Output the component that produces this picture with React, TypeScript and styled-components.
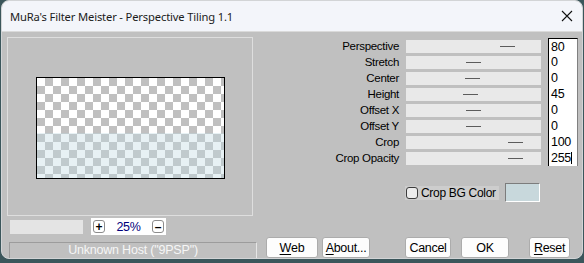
import React from 'react';
import styled, { createGlobalStyle } from 'styled-components';

const GlobalStyle = createGlobalStyle`
  html, body {
    margin: 0;
    padding: 0;
    background: #3b565b;
  }
  body {
    width: 584px;
    height: 263px;
    overflow: hidden;
    font-family: 'Liberation Sans', Arial, sans-serif;
  }
`;

const SLIDERS = [
  { label: 'Perspective', value: '80', thumb: 94 },
  { label: 'Stretch', value: '0', thumb: 60 },
  { label: 'Center', value: '0', thumb: 59 },
  { label: 'Height', value: '45', thumb: 57 },
  { label: 'Offset X', value: '0', thumb: 60 },
  { label: 'Offset Y', value: '0', thumb: 60 },
  { label: 'Crop', value: '100', thumb: 102 },
  { label: 'Crop Opacity', value: '255', thumb: 102, focused: true },
];

export default function App() {
  return (
    <>
      <GlobalStyle />
      <Window>
        <TitleBar>
          <Title>MuRa's Filter Meister - Perspective Tiling 1.1</Title>
          <CloseIcon width="12" height="12" viewBox="0 0 12 12">
            <path d="M1 1 L11 11 M11 1 L1 11" stroke="#111" strokeWidth="1.1" fill="none" />
          </CloseIcon>
        </TitleBar>
        <Client>
          <LeftColumn>
            <PreviewFrame>
              <Preview />
            </PreviewFrame>
            <ZoomRow>
              <ProgressBox />
              <ZoomBox>
                <ZoomButton>+</ZoomButton>
                <ZoomValue>25%</ZoomValue>
                <ZoomButton>–</ZoomButton>
              </ZoomBox>
            </ZoomRow>
            <StatusBar>Unknown Host ("9PSP")</StatusBar>
          </LeftColumn>
          <RightColumn>
            <SliderGrid>
              {SLIDERS.map((s, i) => (
                <React.Fragment key={s.label}>
                  <Label>{s.label}</Label>
                  <Track>
                    <Thumb $left={s.thumb} />
                  </Track>
                  <ValueBox $first={i === 0}>
                    {s.value}
                    {s.focused && <Caret />}
                  </ValueBox>
                </React.Fragment>
              ))}
            </SliderGrid>
            <CheckRow>
              <CheckLabel>
                <CheckBox />
                Crop BG Color
              </CheckLabel>
              <Swatch />
            </CheckRow>
            <ButtonRow>
              <Button $width={52}>
                <u>W</u>eb
              </Button>
              <Button $width={48} $gap={4}>
                <u>A</u>bout...
              </Button>
              <Button $width={46} $gap={35}>
                Cancel
              </Button>
              <Button $width={48} $gap={10}>
                OK
              </Button>
              <Button $width={41} $gap={20}>
                <u>R</u>eset
              </Button>
            </ButtonRow>
          </RightColumn>
        </Client>
      </Window>
    </>
  );
}

const Window = styled.div`
  display: flex;
  flex-direction: column;
  box-sizing: border-box;
  margin-left: 1px;
  width: 582px;
  height: 259px;
  border: 1px solid #d2d4d6;
  border-radius: 8px;
  overflow: hidden;
  background: #c0c0c0;
`;

const TitleBar = styled.div`
  display: flex;
  align-items: center;
  justify-content: space-between;
  height: 30px;
  padding: 0 9px 0 8px;
  background: #f3f5fa;
  flex-shrink: 0;
`;

const Title = styled.div`
  font-family: 'Noto Sans', 'Open Sans', sans-serif;
  font-size: 11.2px;
  color: #1b1b1b;
  letter-spacing: -0.15px;
`;

const CloseIcon = styled.svg`
  display: block;
`;

const Client = styled.div`
  display: flex;
  flex: 1;
  border-top: 1px solid #dadada;
  padding: 5px 0 0 5px;
`;

const LeftColumn = styled.div`
  display: flex;
  flex-direction: column;
  width: 250px;
`;

const PreviewFrame = styled.div`
  display: flex;
  align-items: center;
  justify-content: center;
  box-sizing: border-box;
  width: 246px;
  height: 179px;
  border: 1px solid #dedede;
  padding-top: 2px;
`;

const Preview = styled.div`
  box-sizing: border-box;
  width: 189px;
  height: 102px;
  border: 1px solid #000;
  background:
    linear-gradient(to bottom, transparent 55px, rgba(192, 218, 226, 0.38) 55px),
    repeating-conic-gradient(#c0c0c0 0 25%, #ffffff 0 50%) 0 0 / 16px 16px;
`;

const ZoomRow = styled.div`
  display: flex;
  align-items: center;
  gap: 8px;
  margin-top: 2px;
  padding-left: 3px;
`;

const ProgressBox = styled.div`
  width: 73px;
  height: 14px;
  background: #e4e4e4;
`;

const ZoomBox = styled.div`
  display: flex;
  align-items: center;
  justify-content: space-between;
  box-sizing: border-box;
  width: 75px;
  height: 17px;
  padding: 0 2px;
  background: #fff;
`;

const ZoomButton = styled.div`
  display: flex;
  align-items: center;
  justify-content: center;
  box-sizing: border-box;
  width: 12px;
  height: 13px;
  border: 1px solid #8c8c8c;
  border-radius: 3px;
  font-size: 12px;
  font-weight: bold;
  line-height: 1;
  color: #000;
`;

const ZoomValue = styled.div`
  font-size: 12.5px;
  color: #00007b;
  letter-spacing: -0.3px;
`;

const StatusBar = styled.div`
  box-sizing: border-box;
  margin: 7px 0 0 2px;
  width: 248px;
  height: 17px;
  border-top: 1px solid #9c9c9c;
  border-left: 1px solid #9c9c9c;
  border-bottom: 1px solid #e6e6e6;
  border-right: 1px solid #e6e6e6;
  font-size: 12.5px;
  line-height: 15px;
  color: #f6f6f6;
  text-align: center;
  letter-spacing: -0.2px;
`;

const RightColumn = styled.div`
  display: flex;
  flex-direction: column;
  padding: 1px 0 0 5px;
`;

const SliderGrid = styled.div`
  display: grid;
  grid-template-columns: 137px 135px 30px;
  grid-auto-rows: 16px;
  column-gap: 7px;
  align-items: center;
`;

const Label = styled.div`
  text-align: right;
  font-size: 11.5px;
  letter-spacing: -0.3px;
  color: #000;
  line-height: 16px;
`;

const Track = styled.div`
  position: relative;
  height: 13px;
  background: #e9e9e9;
`;

const Thumb = styled.div<{ $left: number }>`
  position: absolute;
  left: ${(p) => p.$left}px;
  top: 6px;
  width: 15px;
  height: 1px;
  background: #5c5c5c;
`;

const ValueBox = styled.div<{ $first?: boolean }>`
  display: flex;
  align-items: center;
  box-sizing: border-box;
  height: 16px;
  padding-left: 2px;
  background: #fff;
  border-left: 1px solid #000;
  border-right: 1px solid #808080;
  border-top: ${(p) => (p.$first ? '1px solid #000' : 'none')};
  font-size: 12.5px;
  letter-spacing: -0.3px;
  color: #000;
`;

const Caret = styled.span`
  display: inline-block;
  width: 1px;
  height: 12px;
  background: #000;
`;

const CheckRow = styled.div`
  display: flex;
  align-items: center;
  gap: 6px;
  margin-top: 17px;
  padding-left: 143px;
`;

const CheckLabel = styled.div`
  display: flex;
  align-items: center;
  gap: 3px;
  box-sizing: border-box;
  width: 94px;
  height: 14px;
  padding-left: 1px;
  background: #cdcdcd;
  font-size: 12px;
  letter-spacing: -0.3px;
  color: #000;
`;

const CheckBox = styled.div`
  box-sizing: border-box;
  width: 12px;
  height: 12px;
  border: 1px solid #3c3c3c;
  border-radius: 3px;
  background: #ececec;
`;

const Swatch = styled.div`
  box-sizing: border-box;
  width: 35px;
  height: 19px;
  border-top: 1px solid #7c7c7c;
  border-left: 1px solid #7c7c7c;
  border-bottom: 1px solid #fff;
  border-right: 1px solid #fff;
  background: #c8d8dc;
`;

const ButtonRow = styled.div`
  display: flex;
  margin-top: 35px;
  padding-left: 4px;
`;

const Button = styled.div<{ $width: number; $gap?: number }>`
  display: flex;
  align-items: center;
  justify-content: center;
  box-sizing: border-box;
  width: ${(p) => p.$width}px;
  height: 21px;
  margin-left: ${(p) => p.$gap ?? 0}px;
  border: 1px solid #acacac;
  border-radius: 3px;
  background: #fdfdfd;
  font-size: 12.5px;
  letter-spacing: -0.3px;
  color: #000;

  u {
    text-decoration-thickness: 1px;
    text-underline-offset: 2px;
  }
`;
